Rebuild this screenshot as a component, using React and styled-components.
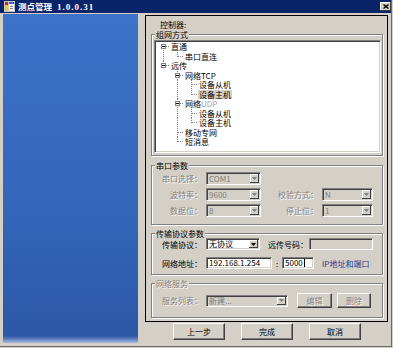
import React from "react";
import styled, { createGlobalStyle, css } from "styled-components";

const FONT = `"Noto Sans CJK SC", "Liberation Sans", sans-serif`;
const FACE = "#d4d0c8";

const GlobalStyle = createGlobalStyle`
  * { box-sizing: border-box; }
  html, body { margin: 0; padding: 0; background: ${FACE}; }
  body { font-family: ${FONT}; font-size: 8px; color: #000; }
`;

const disabledText = css`
  color: #808080;
  text-shadow: 1px 1px 0 #fff;
`;

const sunken = css`
  border: 1px solid;
  border-color: #808080 #fff #fff #808080;
  box-shadow: inset 1px 1px 0 #404040, inset -1px -1px 0 ${FACE};
`;

const Window = styled.div`
  width: 393px;
  height: 348px;
  padding-right: 2px;
  background: ${FACE};
  box-shadow: inset -1px -1px 0 ${FACE}, inset -2px -2px 0 #6a6a6a;
  overflow: hidden;
`;

const TitleBar = styled.div`
  height: 13px;
  display: flex;
  align-items: center;
  padding-left: 4px;
  background: #0a246a;
`;

const AppIcon = styled.svg`
  display: block;
  flex: none;
`;

const Title = styled.span`
  margin-left: 3px;
  color: #fff;
  font-weight: 700;
  font-size: 8.5px;
  line-height: 13px;
  white-space: nowrap;
`;

const Version = styled.span`
  margin-left: 5px;
  font-family: "Liberation Serif", serif;
  font-size: 9px;
  letter-spacing: 1px;
`;

const CloseButton = styled.div`
  margin-left: auto;
  width: 11px;
  height: 9px;
  display: flex;
  align-items: center;
  justify-content: center;
  background: ${FACE};
  box-shadow: inset -1px -1px 0 #404040, inset 1px 1px 0 #fff;
`;

const Body = styled.div`
  display: flex;
  padding: 1px 0 0 3px;
`;

const SidePanel = styled.div`
  flex: none;
  width: 135px;
  height: 329px;
  background: linear-gradient(
    180deg,
    #3d72c8 0%,
    #3567bb 55%,
    #2c58a6 calc(100% - 7px),
    #6f8cc4 calc(100% - 3px),
    #a9bbdc 100%
  );
`;

const Main = styled.div`
  flex: none;
  width: 243px;
  margin-left: 7px;
  padding-top: 1px;
  display: flex;
  flex-direction: column;
`;

const Frame = styled.div`
  height: 307px;
  border: 1px solid #000;
  padding: 4px 4px 3px 5px;
`;

const FrameTitle = styled.div`
  line-height: 9px;
  padding-left: 9px;
`;

const GroupBox = styled.div`
  position: relative;
  margin-top: ${(p) => p.$mt}px;
  padding: ${(p) => p.$pt}px 0 ${(p) => p.$pb}px;
  border: 1px solid #808080;
  box-shadow: inset 1px 1px 0 #fff, 1px 1px 0 #fff;
`;

const GroupCaption = styled.span`
  position: absolute;
  top: -5px;
  left: 3px;
  padding: 0 1px;
  line-height: 9px;
  white-space: nowrap;
  background: ${FACE};
  ${(p) => p.$disabled && disabledText}
`;

/* ---------- tree ---------- */

const Tree = styled.div`
  margin-left: 2px;
  width: 227px;
  height: 113px;
  background: #fff;
  border: 1px solid;
  border-color: #808080 #fff #fff #808080;
  box-shadow: inset 1px 1px 0 #404040, inset -1px -1px 0 ${FACE};
  padding: 1px;
`;

const TreeRow = styled.div`
  display: flex;
  height: ${(p) => p.$h}px;
  line-height: ${(p) => p.$h}px;
  white-space: nowrap;
`;

const dotsV =
  "repeating-linear-gradient(to bottom, #808080 0 1px, transparent 1px 2px)";
const dotsH =
  "repeating-linear-gradient(to right, #808080 0 1px, transparent 1px 2px)";

const lineLayers = ({ $up, $down, $arm }) => {
  const img = [];
  const size = [];
  const pos = [];
  if ($up && $down) {
    img.push(dotsV);
    size.push("1px 100%");
    pos.push("7px 0");
  } else if ($up) {
    img.push(dotsV);
    size.push("1px 5px");
    pos.push("7px 0");
  } else if ($down) {
    img.push(dotsV);
    size.push("1px calc(100% - 4px)");
    pos.push("7px 4px");
  }
  if ($arm) {
    img.push(dotsH);
    size.push("6px 1px");
    pos.push("8px 4px");
  }
  if (!img.length) return "";
  return css`
    background-image: ${img.join(", ")};
    background-size: ${size.join(", ")};
    background-position: ${pos.join(", ")};
    background-repeat: no-repeat;
  `;
};

const LineCell = styled.span`
  flex: none;
  width: 14px;
  height: 100%;
  display: flex;
  align-items: flex-start;
  padding: 2px 0 0 5px;
  ${lineLayers}
`;

const ExpanderIcon = styled.svg`
  display: block;
`;

const TreeText = styled.span`
  padding: 0 1px;
  height: 100%;
  ${(p) =>
    p.$selected &&
    css`
      background: ${FACE};
    `}
`;

const FaintLatin = styled.span`
  color: #9c9caa;
`;

const TREE = [
  { label: "直通", cells: [{ down: 1, arm: 1, box: 1 }] },
  { label: "串口直连", cells: [{ up: 1, down: 1 }, { up: 1, arm: 1 }] },
  { label: "远传", cells: [{ up: 1, arm: 1, box: 1 }] },
  { label: "网络TCP", cells: [{}, { up: 1, down: 1, arm: 1, box: 1 }] },
  { label: "设备从机", cells: [{}, { up: 1, down: 1 }, { up: 1, down: 1, arm: 1 }] },
  { label: "设备主机", selected: true, cells: [{}, { up: 1, down: 1 }, { up: 1, arm: 1 }] },
  { label: "网络", faint: "UDP", cells: [{}, { up: 1, down: 1, arm: 1, box: 1 }] },
  { label: "设备从机", cells: [{}, { up: 1, down: 1 }, { up: 1, down: 1, arm: 1 }] },
  { label: "设备主机", cells: [{}, { up: 1, down: 1 }, { up: 1, arm: 1 }] },
  { label: "移动专网", cells: [{}, { up: 1, down: 1, arm: 1 }] },
  { label: "短消息", cells: [{}, { up: 1, arm: 1 }] },
];

function Expander() {
  return (
    <ExpanderIcon width="5" height="5" viewBox="0 0 5 5">
      <rect x="0.5" y="0.5" width="4" height="4" fill="#fff" stroke="#808080" />
      <path d="M1 2.5h3" stroke="#000" />
    </ExpanderIcon>
  );
}

/* ---------- fields ---------- */

const ParamGrid = styled.div`
  display: grid;
  grid-template-columns: 42px 55px 53px 51px;
  column-gap: 4px;
  row-gap: 3px;
  align-items: center;
  padding-left: 8px;
`;

const GridGap = styled.span`
  grid-column: span 2;
`;

const FieldStack = styled.div`
  display: flex;
  flex-direction: column;
  gap: ${(p) => p.$gap || 0}px;
`;

const FieldRow = styled.div`
  display: flex;
  align-items: center;
  height: ${(p) => p.$h}px;
  padding-left: 8px;
`;

const FieldLabel = styled.span`
  flex: none;
  width: ${(p) => p.$w ?? 42}px;
  margin-left: ${(p) => p.$ml || 0}px;
  text-align: ${(p) => p.$align || "right"};
  line-height: 9px;
  white-space: nowrap;
  ${(p) => p.$disabled && disabledText}
`;

const Combo = styled.div`
  ${sunken}
  flex: none;
  width: ${(p) => (p.$w ? `${p.$w}px` : "auto")};
  height: ${(p) => p.$h || 13}px;
  margin-left: ${(p) => p.$ml || 0}px;
  padding: 1px;
  display: flex;
  align-items: stretch;
  background: ${(p) => (p.$disabled ? FACE : "#fff")};
  color: ${(p) => (p.$disabled ? "#808080" : "#000")};
`;

const ComboValue = styled.span`
  flex: 1;
  min-width: 0;
  padding-left: 1px;
  display: flex;
  align-items: center;
  white-space: nowrap;
  line-height: 1;
`;

const DropButton = styled.span`
  flex: none;
  width: 9px;
  display: flex;
  align-items: center;
  justify-content: center;
  background: ${FACE};
  box-shadow: inset -1px -1px 0 #404040, inset 1px 1px 0 #fff;
`;

const ArrowIcon = styled.svg`
  display: block;
`;

const TextBox = styled.div`
  ${sunken}
  flex: none;
  width: ${(p) => p.$w}px;
  height: 12px;
  margin-left: ${(p) => p.$ml || 0}px;
  padding-left: 2px;
  display: flex;
  align-items: center;
  white-space: nowrap;
  line-height: 1;
  background: ${(p) => (p.$disabled ? FACE : "#fff")};
`;

const Caret = styled.span`
  display: inline-block;
  width: 1px;
  height: 8px;
  margin-left: 1px;
  background: #000;
`;

const Separator = styled.span`
  flex: none;
  width: 10px;
  text-align: center;
  line-height: 9px;
`;

const Hint = styled.span`
  margin-left: 8px;
  color: #1e3b8f;
  line-height: 9px;
  white-space: nowrap;
`;

const PushButton = styled.button`
  flex: none;
  margin: 0 0 0 ${(p) => p.$ml || 0}px;
  padding: 0;
  width: ${(p) => p.$w}px;
  height: ${(p) => p.$h}px;
  font-family: ${FONT};
  font-size: 8px;
  line-height: 1;
  color: #000;
  background: ${FACE};
  border: 1px solid;
  border-color: #fff #404040 #404040 #fff;
  box-shadow: inset -1px -1px 0 #808080;
  ${(p) => p.$disabled && disabledText}
`;

const ButtonRow = styled.div`
  display: flex;
  gap: 16px;
  margin-top: 1px;
  padding-left: 28px;
`;

function ComboBox({ value, w, h, ml, disabled }) {
  return (
    <Combo $w={w} $h={h} $ml={ml} $disabled={disabled}>
      <ComboValue>{value}</ComboValue>
      <DropButton>
        <ArrowIcon width="5" height="3" viewBox="0 0 5 3">
          <path d="M0 0h5L2.5 3z" fill={disabled ? "#808080" : "#000"} />
        </ArrowIcon>
      </DropButton>
    </Combo>
  );
}

export default function App() {
  return (
    <>
      <GlobalStyle />
      <Window>
        <TitleBar>
          <AppIcon width="11" height="11" viewBox="0 0 11 11">
            <rect x="0" y="0" width="11" height="11" fill="#c8c8c8" />
            <rect x="1" y="1" width="3" height="3" fill="#e02020" />
            <rect x="1" y="4" width="3" height="6" fill="#f5c818" />
            <rect x="5" y="1" width="5" height="9" fill="#f4f4f4" />
            <rect x="5" y="1" width="5" height="2" fill="#2f5fd0" />
            <path d="M6 5.5h3M6 7.5h3" stroke="#8a8a8a" />
          </AppIcon>
          <Title>
            测点管理<Version>1.0.0.31</Version>
          </Title>
          <CloseButton>
            <svg width="6" height="5" viewBox="0 0 6 5">
              <path d="M0.5 0.5l5 4M5.5 0.5l-5 4" stroke="#000" strokeWidth="1.4" />
            </svg>
          </CloseButton>
        </TitleBar>

        <Body>
          <SidePanel />
          <Main>
            <Frame>
              <FrameTitle>控制器:</FrameTitle>

              <GroupBox $mt={5} $pt={5} $pb={2}>
                <GroupCaption>组网方式</GroupCaption>
                <Tree>
                  {TREE.map((row, i) => (
                    <TreeRow key={i} $h={i % 2 === 0 ? 10 : 9}>
                      {row.cells.map((c, j) => (
                        <LineCell key={j} $up={c.up} $down={c.down} $arm={c.arm}>
                          {c.box ? <Expander /> : null}
                        </LineCell>
                      ))}
                      <TreeText $selected={row.selected}>
                        {row.label}
                        {row.faint && <FaintLatin>{row.faint}</FaintLatin>}
                      </TreeText>
                    </TreeRow>
                  ))}
                </Tree>
              </GroupBox>

              <GroupBox $mt={9} $pt={6} $pb={7}>
                <GroupCaption>串口参数</GroupCaption>
                <ParamGrid>
                  <FieldLabel $disabled>串口选择：</FieldLabel>
                  <ComboBox value="COM1" disabled />
                  <GridGap />
                  <FieldLabel $disabled>波特率：</FieldLabel>
                  <ComboBox value="9600" disabled />
                  <FieldLabel $w={53} $disabled>校验方式：</FieldLabel>
                  <ComboBox value="N" disabled />
                  <FieldLabel $disabled>数据位：</FieldLabel>
                  <ComboBox value="8" disabled />
                  <FieldLabel $w={53} $disabled>停止位：</FieldLabel>
                  <ComboBox value="1" disabled />
                </ParamGrid>
              </GroupBox>

              <GroupBox $mt={8} $pt={4} $pb={5}>
                <GroupCaption>传输协议参数</GroupCaption>
                <FieldStack $gap={7}>
                  <FieldRow $h={12}>
                    <FieldLabel>传输协议：</FieldLabel>
                    <ComboBox value="无协议" w={54} h={12} ml={4} />
                    <FieldLabel $w={40} $ml={8} $align="left">
                      远传号码：
                    </FieldLabel>
                    <TextBox $w={64} $ml={1} $disabled />
                  </FieldRow>
                  <FieldRow $h={12}>
                    <FieldLabel>网络地址：</FieldLabel>
                    <TextBox $w={66} $ml={4}>
                      192.168.1.254
                    </TextBox>
                    <Separator>:</Separator>
                    <TextBox $w={32}>
                      5000
                      <Caret />
                    </TextBox>
                    <Hint>IP地址和端口</Hint>
                  </FieldRow>
                </FieldStack>
              </GroupBox>

              <GroupBox $mt={8} $pt={9} $pb={9}>
                <GroupCaption $disabled>网络服务</GroupCaption>
                <FieldRow $h={15}>
                  <FieldLabel $disabled>服务列表：</FieldLabel>
                  <ComboBox value="新建..." w={82} h={12} ml={4} disabled />
                  <PushButton $w={35} $h={15} $ml={9} $disabled>
                    编辑
                  </PushButton>
                  <PushButton $w={34} $h={15} $ml={5} $disabled>
                    删除
                  </PushButton>
                </FieldRow>
              </GroupBox>
            </Frame>

            <ButtonRow>
              <PushButton $w={52} $h={17}>
                上一步
              </PushButton>
              <PushButton $w={52} $h={17}>
                完成
              </PushButton>
              <PushButton $w={52} $h={17}>
                取消
              </PushButton>
            </ButtonRow>
          </Main>
        </Body>
      </Window>
    </>
  );
}
